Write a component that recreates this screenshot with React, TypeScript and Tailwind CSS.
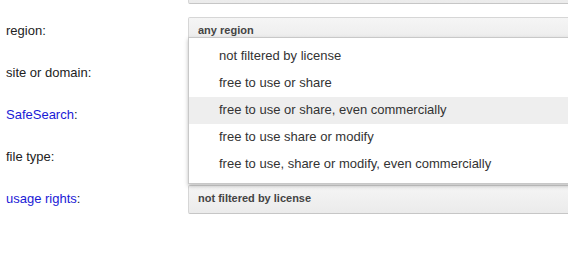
import React from "react";

const rows = [
  { label: "", value: "", link: false },
  { label: "region", value: "any region", link: false },
  { label: "site or domain", value: "", link: false },
  { label: "SafeSearch", value: "", link: true },
  { label: "file type", value: "", link: false },
  { label: "usage rights", value: "not filtered by license", link: true },
];

const licenseOptions = [
  "not filtered by license",
  "free to use or share",
  "free to use or share, even commercially",
  "free to use share or modify",
  "free to use, share or modify, even commercially",
];

const SelectBox: React.FC<{ value: string; open?: boolean }> = ({ value, open }) => (
  <div className="relative shrink-0">
    <div className="h-[29px] w-[420px] rounded-[2px] border border-[#d6d6d6] border-b-[#c6c6c6] bg-gradient-to-b from-[#f5f5f5] to-[#ebebeb] pl-[9px] pt-[6px] text-[11px] font-bold leading-[13px] text-[#444]">
      {value}
    </div>
    {open && (
      <div className="absolute left-0 top-[20px] z-10 w-[420px] border border-[#c8c8c8] bg-white py-[5px] shadow-[0_2px_4px_rgba(0,0,0,0.25)]">
        {licenseOptions.map((opt, i) => (
          <div
            key={opt}
            className={`flex h-[27px] items-center pl-[30px] text-[13px] text-[#333] ${i === 2 ? "bg-[#eeeeee]" : ""}`}
          >
            {opt}
          </div>
        ))}
      </div>
    )}
  </div>
);

export default function App() {
  return (
    <div className="h-[253px] w-[568px] overflow-hidden bg-white font-['Liberation_Sans',Arial,sans-serif]">
      <div className="-mt-[32px]">
        {rows.map((row, i) => (
          <div key={i} className="flex h-[42px] items-center">
            <div className="w-[188px] shrink-0 pl-[6px] text-[13px] text-[#222]">
              {row.label &&
                (row.link ? (
                  <>
                    <span className="text-[#1a1ad6]">{row.label}</span>:
                  </>
                ) : (
                  <>{row.label}:</>
                ))}
            </div>
            <SelectBox value={row.value} open={i === 1} />
          </div>
        ))}
      </div>
    </div>
  );
}
